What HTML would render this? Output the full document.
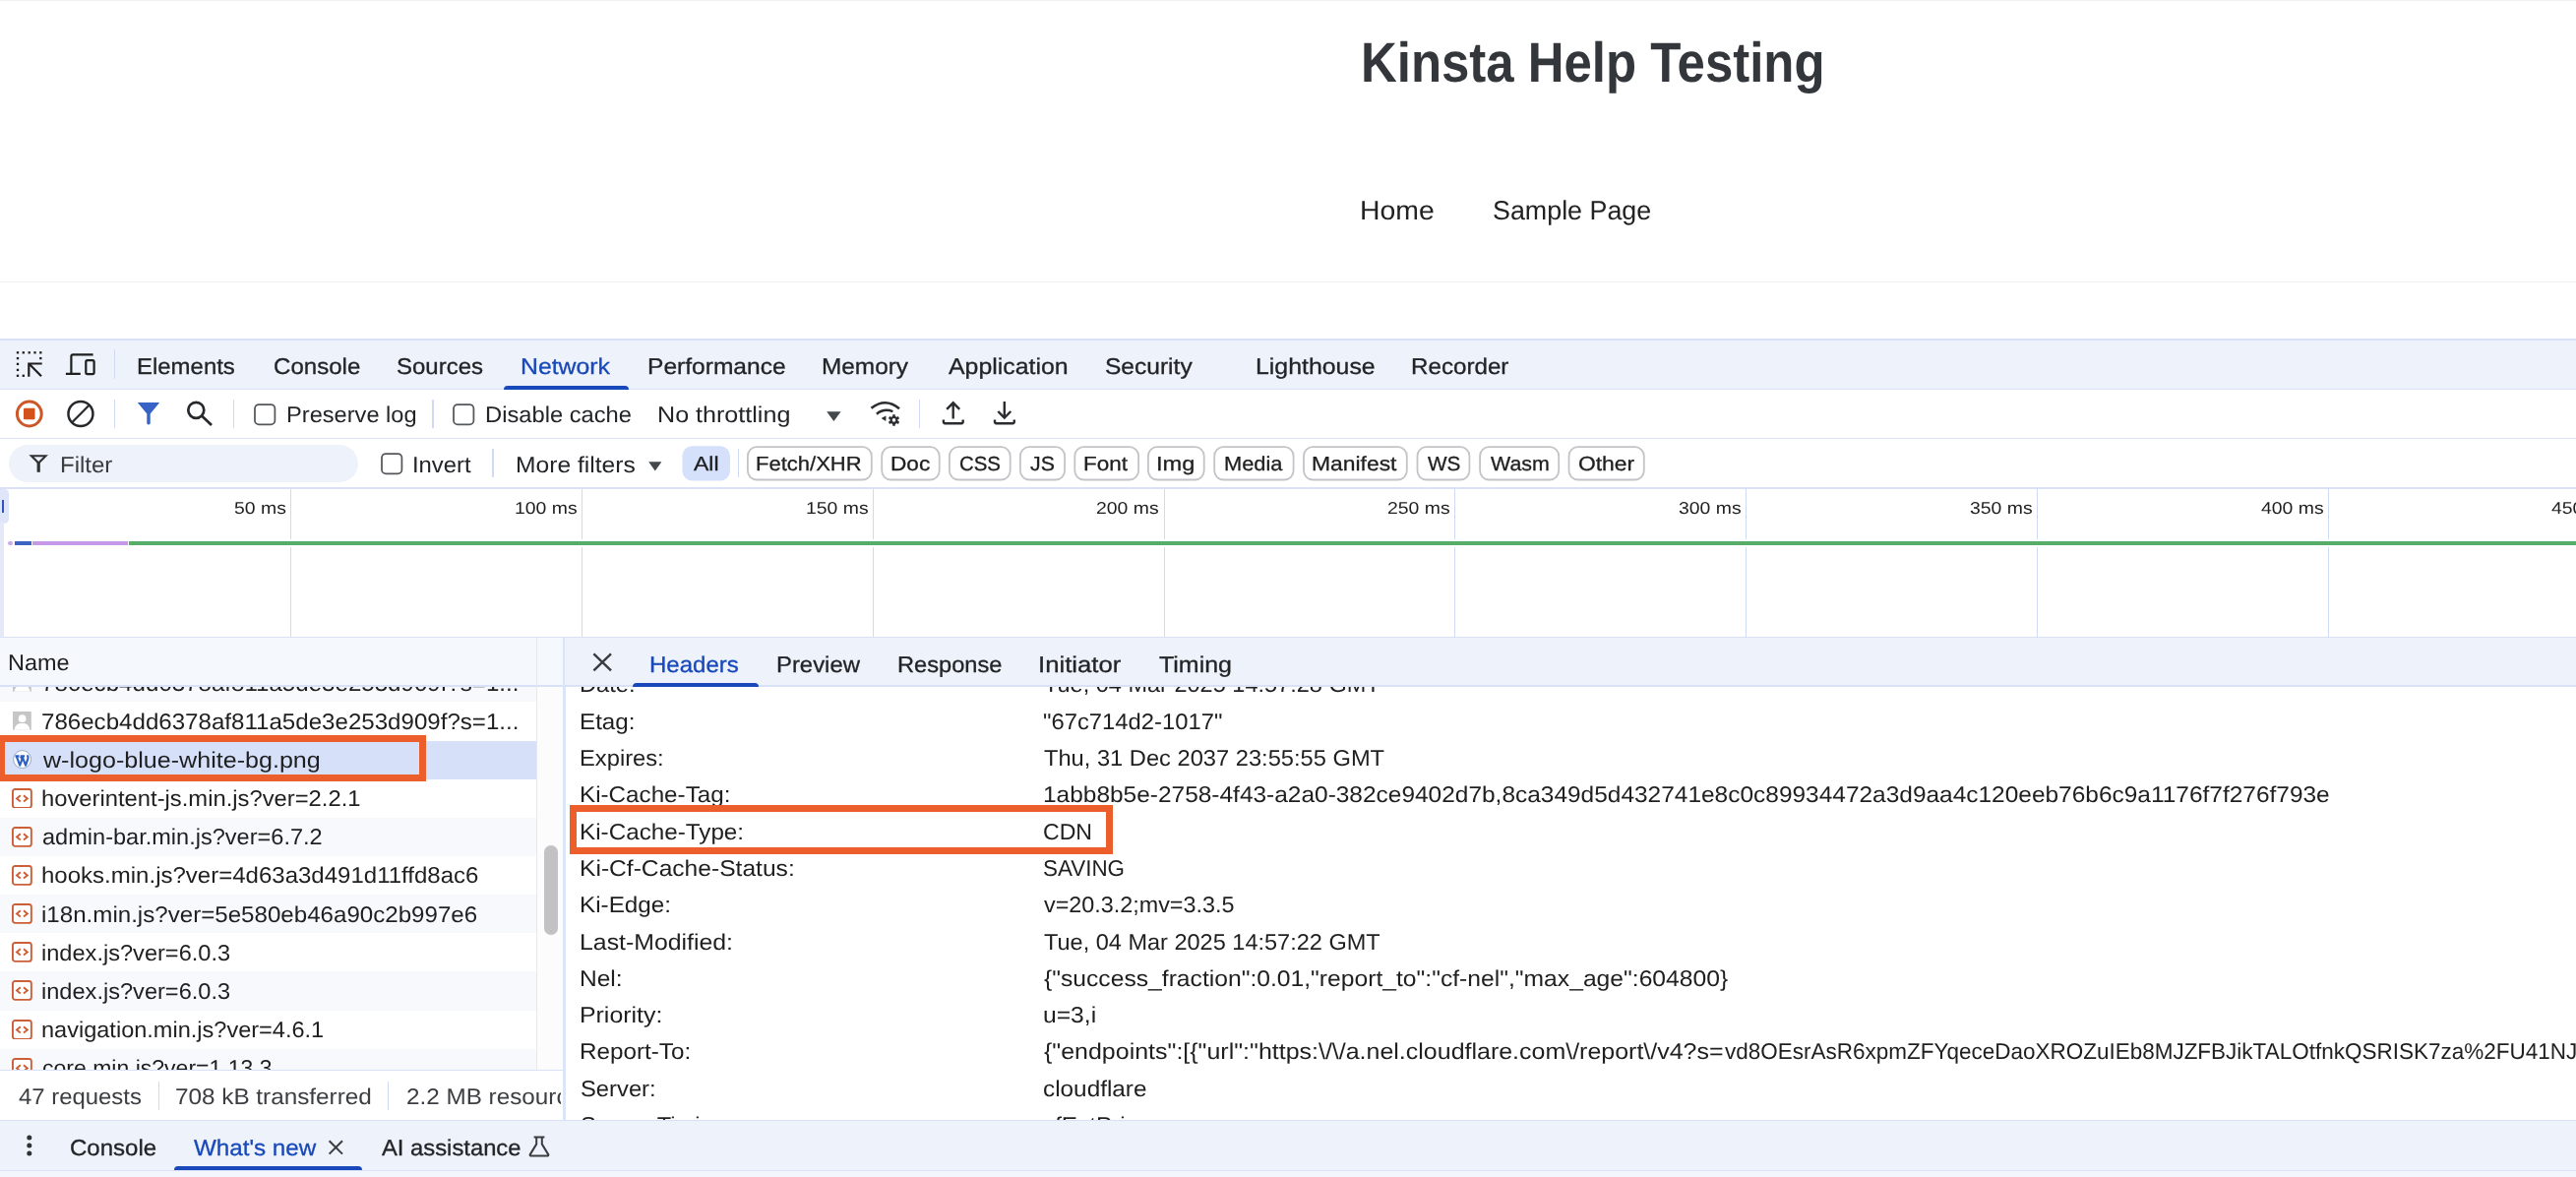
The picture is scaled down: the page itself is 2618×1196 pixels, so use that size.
<!DOCTYPE html>
<html lang="en"><head><meta charset="utf-8"><title>Kinsta Help Testing - DevTools Network</title>
<style>
html,body{margin:0;padding:0;overflow:hidden}
body{width:2618px;height:1196px;position:relative;overflow:hidden;background:#fff;font-family:'Liberation Sans',sans-serif;-webkit-font-smoothing:antialiased;will-change:transform;text-rendering:geometricPrecision}
.a,.t,.pill,.gl,.row,.ric,.sep,svg.i{position:absolute}
.t{white-space:pre;transform-origin:0 50%;letter-spacing:0}
.clip{position:absolute;overflow:hidden}
.clip>.in{position:absolute}
.bar{background:#eef2fa}
.ln{position:absolute;background:#d8e1f6}
.sep{width:1.3px;background:#d0dbf3}
.pill{top:453.6px;height:35.4px;box-sizing:border-box;border:2px solid #c6c6c8;border-radius:10px;background:#fff}
.pill.all{border:none;background:#d5e1fb}
.gl{top:497px;width:1px;height:150px;background:#cfdaf3}
.row{left:0;width:545px;height:39.15px;background:#fff}
.row.odd{background:#f8f9fd}
.row.sel{background:#d6e1f9}
.ric{left:12.3px;width:20px;height:20px}
.cb{position:absolute;box-sizing:border-box;width:21.8px;height:21.8px;border:2.1px solid #4a4c50;border-radius:4.6px;background:#fff}
.ob{position:absolute;box-sizing:border-box;border:7px solid #ec5f2c}
</style></head><body>
<div id="root" style="position:absolute;left:0;top:0;width:2618px;height:1196px;overflow:hidden;contain:paint">
<!-- page -->
<div class="a" style="left:0;top:0;width:2618px;height:1px;background:#f1f1f1"></div>
<div class="a" style="left:0;top:286.3px;width:2618px;height:1.2px;background:#eeeeef"></div>
<span class="t" style="left:1382.6px;top:24.4px;font-size:57px;line-height:80px;color:#33363a;transform:scaleX(0.8933);font-weight:700">Kinsta Help Testing</span>
<span class="t" style="left:1382.0px;top:195.2px;font-size:27.2px;line-height:38px;color:#222;transform:scaleX(1.0450)">Home</span>
<span class="t" style="left:1517.4px;top:195.2px;font-size:27.2px;line-height:38px;color:#222;transform:scaleX(0.9876)">Sample Page</span>

<!-- devtools bars -->
<div class="a bar" style="left:0;top:345px;width:2618px;height:50px"></div>
<div class="ln" style="left:0;top:344.3px;width:2618px;height:1.6px"></div>
<div class="ln" style="left:0;top:394.6px;width:2618px;height:1.6px"></div>
<div class="ln" style="left:0;top:445.1px;width:2618px;height:1.3px"></div>
<div class="ln" style="left:0;top:495.2px;width:2618px;height:1.6px"></div>
<div class="ln" style="left:0;top:646.7px;width:2618px;height:1.6px"></div>
<!-- network underline -->
<div class="a" style="left:512px;top:391.5px;width:127px;height:4px;background:#1848ba;border-radius:4px 4px 0 0"></div>

<!-- tab bar icons -->
<svg class="i" style="left:0;top:345px" width="130" height="50" viewBox="0 345 130 50"><g fill="#1f1f1f"><rect x="16.85" y="357.15" width="2.3" height="2.3"/><rect x="22.65" y="357.15" width="2.3" height="2.3"/><rect x="28.55" y="357.15" width="2.3" height="2.3"/><rect x="34.35" y="357.15" width="2.3" height="2.3"/><rect x="40.15" y="357.15" width="2.3" height="2.3"/><rect x="16.85" y="362.95" width="2.3" height="2.3"/><rect x="16.85" y="368.75" width="2.3" height="2.3"/><rect x="16.85" y="374.75" width="2.3" height="2.3"/><rect x="16.85" y="380.65" width="2.3" height="2.3"/><rect x="40.15" y="362.95" width="2.3" height="2.3"/><rect x="22.65" y="380.65" width="2.3" height="2.3"/></g>
<path d="M42.7 369.5H29.3V382.8M29.6 369.8L42 382.2" fill="none" stroke="#1f1f1f" stroke-width="2.2"/>
<path d="M94.6 360.4H74.2Q72.4 360.4 72.4 362.2V379M66.9 379.8H81.8" fill="none" stroke="#1f1f1f" stroke-width="2.2"/>
<rect x="87.3" y="366.1" width="8.3" height="14.1" rx="1.6" fill="none" stroke="#1f1f1f" stroke-width="2.2"/>
</svg>
<div class="sep" style="left:115.8px;top:355px;height:29.5px"></div>

<!-- toolbar icons -->
<svg class="i" style="left:14px;top:405px" width="32" height="32" viewBox="0 0 32 32"><circle cx="15.8" cy="15.5" r="12.4" fill="none" stroke="#cc5728" stroke-width="3"/><rect x="10" y="9.8" width="11.5" height="11.5" rx="1" fill="#d4511c"/></svg>
<svg class="i" style="left:66px;top:405px" width="32" height="32" viewBox="0 0 32 32" fill="none" stroke="#26282b" stroke-width="2.5"><circle cx="15.95" cy="15.5" r="12.5"/><path d="M7.2 24.2L24.6 6.8" stroke-width="2.2"/></svg>
<div class="sep" style="left:115.8px;top:406px;height:29px"></div>
<svg class="i" style="left:138px;top:407px" width="26" height="26" viewBox="0 0 26 26"><path d="M1.8 2.1H24.2L14.7 13.6V23.4Q13 25.6 11.3 23.4V13.6Z" fill="#3762c6"/></svg>
<svg class="i" style="left:188px;top:406px" width="30" height="28" viewBox="0 0 30 28" fill="none" stroke="#26282b" stroke-width="2.7"><circle cx="11.3" cy="10.8" r="8"/><path d="M17 16.6L27 26"/></svg>
<div class="sep" style="left:236.8px;top:406px;height:29px"></div>
<svg class="i" style="left:257.7px;top:409.5px" width="23" height="23" viewBox="0 0 23 23"><rect x="1" y="1" width="20.4" height="20.4" rx="4.2" fill="#fff" stroke="#54575b" stroke-width="1.75"/></svg>
<div class="sep" style="left:439.4px;top:406px;height:29px"></div>
<svg class="i" style="left:459.7px;top:409.5px" width="23" height="23" viewBox="0 0 23 23"><rect x="1" y="1" width="20.4" height="20.4" rx="4.2" fill="#fff" stroke="#54575b" stroke-width="1.75"/></svg>
<svg class="i" style="left:840px;top:418.2px" width="15" height="10" viewBox="0 0 15 10"><path d="M0.2 0.2H14.6L7.4 9.9Z" fill="#44474b"/></svg>
<svg class="i" style="left:880px;top:400px" width="40" height="40" viewBox="880 400 40 40" fill="none" stroke="#2a2c30">
<path d="M885.5 414.7Q899.9 403.6 914.0 415.2" stroke-width="2.5"/>
<path d="M890.9 420.7Q898.2 414.6 907.4 418.1" stroke-width="2.5"/>
<path d="M895.6 424.9L900.5 422.4L900.3 428Z" fill="#2a2c30" stroke="none"/>
<path d="M908.50 424.40L908.50 421.15M910.67 425.65L913.48 424.02M910.67 428.15L913.48 429.77M908.50 429.40L908.50 432.65M906.33 428.15L903.52 429.77M906.33 425.65L903.52 424.02" stroke-width="2.6"/>
<circle cx="908.5" cy="426.9" r="2.9" stroke-width="2.2"/>
</svg>
<div class="sep" style="left:933.5px;top:406px;height:29px"></div>
<svg class="i" style="left:956px;top:406px" width="26" height="27" viewBox="0 0 26 27" fill="none" stroke="#2a2c30" stroke-width="2.4"><path d="M12.7 19.5V3.6M6.2 9.8L12.7 3.3L19.2 9.8M2.9 20.4V22.6Q2.9 24.2 4.5 24.2H21.1Q22.7 24.2 22.7 22.6V20.4"/></svg>
<svg class="i" style="left:1008px;top:406px" width="26" height="27" viewBox="0 0 26 27" fill="none" stroke="#2a2c30" stroke-width="2.4"><path d="M12.8 2V18.2M6.3 12L12.8 18.5L19.3 12M3 20.4V22.6Q3 24.2 4.6 24.2H21.2Q22.8 24.2 22.8 22.6V20.4"/></svg>

<!-- filter row -->
<div class="a" style="left:9.3px;top:452.2px;width:354.7px;height:37.8px;border-radius:19px;background:#edf2fb"></div>
<svg class="i" style="left:29px;top:461px" width="20" height="20" viewBox="0 0 20 20" fill="none" stroke="#2f3135"><path d="M2.9 2.3H17.5L10.2 9.6Z" stroke-width="2.1" stroke-linejoin="miter"/><path d="M10.2 8.6V18.8" stroke-width="3.2"/></svg>
<svg class="i" style="left:386.5px;top:459.7px" width="23" height="23" viewBox="0 0 23 23"><rect x="1" y="1" width="20.4" height="20.4" rx="4.2" fill="#fff" stroke="#54575b" stroke-width="1.75"/></svg>
<div class="sep" style="left:500.4px;top:456px;height:29px"></div>
<svg class="i" style="left:658.6px;top:468.5px" width="14" height="10" viewBox="0 0 14 10"><path d="M0.2 0.2H13.4L6.8 9.6Z" fill="#44474b"/></svg>
<div class="sep" style="left:749.7px;top:456px;height:29px"></div>
<svg class="i" style="left:680px;top:445px" width="1010" height="52" viewBox="680 445 1010 52"><rect x="693.4" y="453.3" width="48.6" height="35.1" rx="10" fill="#d5e1fb"/><rect x="759.9" y="454.2" width="125.9" height="33.3" rx="9.2" fill="#fff" stroke="#c3c4c7" stroke-width="1.8"/><rect x="896.2" y="454.2" width="58.5" height="33.3" rx="9.2" fill="#fff" stroke="#c3c4c7" stroke-width="1.8"/><rect x="964.9" y="454.2" width="61.8" height="33.3" rx="9.2" fill="#fff" stroke="#c3c4c7" stroke-width="1.8"/><rect x="1036.9" y="454.2" width="45.2" height="33.3" rx="9.2" fill="#fff" stroke="#c3c4c7" stroke-width="1.8"/><rect x="1092.3" y="454.2" width="64.8" height="33.3" rx="9.2" fill="#fff" stroke="#c3c4c7" stroke-width="1.8"/><rect x="1166.9" y="454.2" width="56.8" height="33.3" rx="9.2" fill="#fff" stroke="#c3c4c7" stroke-width="1.8"/><rect x="1234.2" y="454.2" width="80.4" height="33.3" rx="9.2" fill="#fff" stroke="#c3c4c7" stroke-width="1.8"/><rect x="1325.0" y="454.2" width="104.8" height="33.3" rx="9.2" fill="#fff" stroke="#c3c4c7" stroke-width="1.8"/><rect x="1440.5" y="454.2" width="52.9" height="33.3" rx="9.2" fill="#fff" stroke="#c3c4c7" stroke-width="1.8"/><rect x="1504.1" y="454.2" width="80.1" height="33.3" rx="9.2" fill="#fff" stroke="#c3c4c7" stroke-width="1.8"/><rect x="1594.5" y="454.2" width="76.3" height="33.3" rx="9.2" fill="#fff" stroke="#c3c4c7" stroke-width="1.8"/></svg>

<!-- timeline -->
<div class="gl" style="left:295px"></div><div class="gl" style="left:591px"></div><div class="gl" style="left:887px"></div><div class="gl" style="left:1183px"></div><div class="gl" style="left:1478px"></div><div class="gl" style="left:1774px"></div><div class="gl" style="left:2070px"></div><div class="gl" style="left:2366px"></div>
<div class="a" style="left:0;top:497px;width:8.8px;height:34.5px;background:#dfe6fa;border-radius:0 4.5px 4.5px 0"></div>
<div class="a" style="left:0;top:531px;width:3.6px;height:115.5px;background:#e4e9f8"></div>
<div class="a" style="left:1.9px;top:508px;width:1.8px;height:13px;background:#2f55c0"></div>
<div class="a" style="left:4px;top:548px;width:2614px;height:8px;background:#fff"></div>
<div class="a" style="left:131.2px;top:549.8px;width:2487px;height:4.3px;background:#56ae68"></div>
<div class="a" style="left:33.3px;top:549.8px;width:96.5px;height:4.3px;background:#c599e8"></div>
<div class="a" style="left:14.7px;top:549.8px;width:17.3px;height:4.3px;background:#3a62c0"></div>
<div class="a" style="left:8.2px;top:550px;width:4.7px;height:4px;background:#cfa8ea;border-radius:2px"></div>
<span class="t" style="left:237.8px;top:504.9px;font-size:17.1px;line-height:24px;color:#1f1f1f;transform:scaleX(1.1350)">50 ms</span>
<span class="t" style="left:522.8px;top:504.9px;font-size:17.1px;line-height:24px;color:#1f1f1f;transform:scaleX(1.1350)">100 ms</span>
<span class="t" style="left:818.6px;top:504.9px;font-size:17.1px;line-height:24px;color:#1f1f1f;transform:scaleX(1.1350)">150 ms</span>
<span class="t" style="left:1114.4px;top:504.9px;font-size:17.1px;line-height:24px;color:#1f1f1f;transform:scaleX(1.1350)">200 ms</span>
<span class="t" style="left:1410.2px;top:504.9px;font-size:17.1px;line-height:24px;color:#1f1f1f;transform:scaleX(1.1350)">250 ms</span>
<span class="t" style="left:1706.0px;top:504.9px;font-size:17.1px;line-height:24px;color:#1f1f1f;transform:scaleX(1.1350)">300 ms</span>
<span class="t" style="left:2001.8px;top:504.9px;font-size:17.1px;line-height:24px;color:#1f1f1f;transform:scaleX(1.1350)">350 ms</span>
<span class="t" style="left:2297.6px;top:504.9px;font-size:17.1px;line-height:24px;color:#1f1f1f;transform:scaleX(1.1350)">400 ms</span>
<span class="t" style="left:2593.2px;top:504.9px;font-size:17.1px;line-height:24px;color:#1f1f1f;transform:scaleX(1.1350)">450 ms</span>

<!-- name header -->
<div class="a" style="left:0;top:648.3px;width:573px;height:48.4px;background:#f5f8fd"></div>
<div class="ln" style="left:0;top:696.4px;width:573px;height:1.5px"></div>
<!-- list -->
<div class="clip" style="left:0;top:698px;width:545px;height:389px;background:#fff"><div class="in" style="left:0;top:-698px">
<div class="row odd" style="top:674.27px"></div><svg class="ric" style="left:13px;top:684.1px;width:18.8px;height:18.8px" viewBox="0 0 20 20"><rect width="20" height="20" fill="#c6c6c6"/><circle cx="10.2" cy="7.6" r="4.1" fill="#fff"/><path d="M1.6 20c0.6-4.4 3.4-6.6 6.4-7.2h4.4c3 0.6 5.6 2.8 6.2 7.2z" fill="#fff"/></svg><div class="row" style="top:713.42px"></div><svg class="ric" style="left:13px;top:723.3px;width:18.8px;height:18.8px" viewBox="0 0 20 20"><rect width="20" height="20" fill="#c6c6c6"/><circle cx="10.2" cy="7.6" r="4.1" fill="#fff"/><path d="M1.6 20c0.6-4.4 3.4-6.6 6.4-7.2h4.4c3 0.6 5.6 2.8 6.2 7.2z" fill="#fff"/></svg><div class="row sel" style="top:752.57px"></div><svg class="ric" style="left:12.9px;top:762.2px;width:19.2px;height:19.2px" viewBox="0 0 20 20"><circle cx="10" cy="10" r="9.4" fill="#fdfdff" stroke="#8b9bc4" stroke-width="0.9"/><path d="M2.6 6.6h4.2M8 6.6h4.6M4 6.8l3.5 9.6 2.3-6.4-1.4-3.2M10 6.8l3.6 9.6 2.4-6.8c0.6-1.8 0.2-3-0.8-4" fill="none" stroke="#2a5fc4" stroke-width="2.2" stroke-linejoin="round"/></svg><div class="row" style="top:791.72px"></div><svg class="ric" style="left:11.9px;top:800.6px;width:20.8px;height:20.8px" viewBox="0 0 20.8 20.8"><rect x="0.95" y="0.95" width="18.9" height="18.9" rx="2.4" fill="#fff" stroke="#cb5f38" stroke-width="1.9"/><path d="M8.8 7.3L5 10.5l3.8 3M12 7.3l3.8 3.2-3.8 3" fill="none" stroke="#cb5f38" stroke-width="1.9"/></svg><div class="row odd" style="top:830.88px"></div><svg class="ric" style="left:11.9px;top:839.8px;width:20.8px;height:20.8px" viewBox="0 0 20.8 20.8"><rect x="0.95" y="0.95" width="18.9" height="18.9" rx="2.4" fill="#fff" stroke="#cb5f38" stroke-width="1.9"/><path d="M8.8 7.3L5 10.5l3.8 3M12 7.3l3.8 3.2-3.8 3" fill="none" stroke="#cb5f38" stroke-width="1.9"/></svg><div class="row" style="top:870.02px"></div><svg class="ric" style="left:11.9px;top:878.9px;width:20.8px;height:20.8px" viewBox="0 0 20.8 20.8"><rect x="0.95" y="0.95" width="18.9" height="18.9" rx="2.4" fill="#fff" stroke="#cb5f38" stroke-width="1.9"/><path d="M8.8 7.3L5 10.5l3.8 3M12 7.3l3.8 3.2-3.8 3" fill="none" stroke="#cb5f38" stroke-width="1.9"/></svg><div class="row odd" style="top:909.17px"></div><svg class="ric" style="left:11.9px;top:918.0px;width:20.8px;height:20.8px" viewBox="0 0 20.8 20.8"><rect x="0.95" y="0.95" width="18.9" height="18.9" rx="2.4" fill="#fff" stroke="#cb5f38" stroke-width="1.9"/><path d="M8.8 7.3L5 10.5l3.8 3M12 7.3l3.8 3.2-3.8 3" fill="none" stroke="#cb5f38" stroke-width="1.9"/></svg><div class="row" style="top:948.32px"></div><svg class="ric" style="left:11.9px;top:957.2px;width:20.8px;height:20.8px" viewBox="0 0 20.8 20.8"><rect x="0.95" y="0.95" width="18.9" height="18.9" rx="2.4" fill="#fff" stroke="#cb5f38" stroke-width="1.9"/><path d="M8.8 7.3L5 10.5l3.8 3M12 7.3l3.8 3.2-3.8 3" fill="none" stroke="#cb5f38" stroke-width="1.9"/></svg><div class="row odd" style="top:987.47px"></div><svg class="ric" style="left:11.9px;top:996.3px;width:20.8px;height:20.8px" viewBox="0 0 20.8 20.8"><rect x="0.95" y="0.95" width="18.9" height="18.9" rx="2.4" fill="#fff" stroke="#cb5f38" stroke-width="1.9"/><path d="M8.8 7.3L5 10.5l3.8 3M12 7.3l3.8 3.2-3.8 3" fill="none" stroke="#cb5f38" stroke-width="1.9"/></svg><div class="row" style="top:1026.62px"></div><svg class="ric" style="left:11.9px;top:1035.5px;width:20.8px;height:20.8px" viewBox="0 0 20.8 20.8"><rect x="0.95" y="0.95" width="18.9" height="18.9" rx="2.4" fill="#fff" stroke="#cb5f38" stroke-width="1.9"/><path d="M8.8 7.3L5 10.5l3.8 3M12 7.3l3.8 3.2-3.8 3" fill="none" stroke="#cb5f38" stroke-width="1.9"/></svg><div class="row odd" style="top:1065.77px"></div><svg class="ric" style="left:11.9px;top:1074.6px;width:20.8px;height:20.8px" viewBox="0 0 20.8 20.8"><rect x="0.95" y="0.95" width="18.9" height="18.9" rx="2.4" fill="#fff" stroke="#cb5f38" stroke-width="1.9"/><path d="M8.8 7.3L5 10.5l3.8 3M12 7.3l3.8 3.2-3.8 3" fill="none" stroke="#cb5f38" stroke-width="1.9"/></svg>
<span class="t" style="left:42.3px;top:677.6px;font-size:22.9px;line-height:32px;color:#1f1f1f;transform:scaleX(1.0530)">786ecb4dd6378af811a5de3e253d909f?s=1...</span>
<span class="t" style="left:42.3px;top:716.7px;font-size:22.9px;line-height:32px;color:#1f1f1f;transform:scaleX(1.0530)">786ecb4dd6378af811a5de3e253d909f?s=1...</span>
<span class="t" style="left:43.5px;top:755.9px;font-size:22.9px;line-height:32px;color:#1f1f1f;transform:scaleX(1.0963)">w-logo-blue-white-bg.png</span>
<span class="t" style="left:41.9px;top:795.0px;font-size:22.9px;line-height:32px;color:#1f1f1f;transform:scaleX(1.0389)">hoverintent-js.min.js?ver=2.2.1</span>
<span class="t" style="left:42.5px;top:834.2px;font-size:22.9px;line-height:32px;color:#1f1f1f;transform:scaleX(1.0287)">admin-bar.min.js?ver=6.7.2</span>
<span class="t" style="left:41.8px;top:873.3px;font-size:22.9px;line-height:32px;color:#1f1f1f;transform:scaleX(1.0492)">hooks.min.js?ver=4d63a3d491d11ffd8ac6</span>
<span class="t" style="left:41.9px;top:912.5px;font-size:22.9px;line-height:32px;color:#1f1f1f;transform:scaleX(1.0536)">i18n.min.js?ver=5e580eb46a90c2b997e6</span>
<span class="t" style="left:41.9px;top:951.6px;font-size:22.9px;line-height:32px;color:#1f1f1f;transform:scaleX(1.0305)">index.js?ver=6.0.3</span>
<span class="t" style="left:41.9px;top:990.8px;font-size:22.9px;line-height:32px;color:#1f1f1f;transform:scaleX(1.0305)">index.js?ver=6.0.3</span>
<span class="t" style="left:41.9px;top:1029.9px;font-size:22.9px;line-height:32px;color:#1f1f1f;transform:scaleX(1.0283)">navigation.min.js?ver=4.6.1</span>
<span class="t" style="left:42.5px;top:1069.0px;font-size:22.9px;line-height:32px;color:#1f1f1f;transform:scaleX(1.0055)">core.min.js?ver=1.13.3</span>
</div></div>
<!-- scrollbar -->
<div class="a" style="left:545px;top:698px;width:28px;height:389px;background:#fcfcfc"></div>
<div class="a" style="left:544.8px;top:648.3px;width:1.2px;height:439px;background:#e6e8ee"></div>
<div class="a" style="left:553px;top:859.3px;width:13.7px;height:90.8px;border-radius:7px;background:#c2c2c4"></div>

<!-- status bar -->
<div class="ln" style="left:0;top:1086.6px;width:573px;height:1.5px"></div>
<div class="sep" style="left:160.8px;top:1098.5px;height:29px"></div>
<div class="sep" style="left:393.8px;top:1098.5px;height:29px"></div>
<div class="clip" style="left:0;top:1089px;width:569.5px;height:48px"><div class="in" style="left:0;top:-1089px">
<span class="t" style="left:412.5px;top:1097.8px;font-size:22.9px;line-height:32px;color:#3c3e42;transform:scaleX(1.0600)">2.2 MB resources</span>
</div></div>
<!-- divider -->
<div class="a" style="left:572.2px;top:648px;width:2.4px;height:490px;background:#dbe5f9"></div>

<!-- right panel -->
<div class="a bar" style="left:574px;top:648.3px;width:2044px;height:48.6px"></div>
<div class="ln" style="left:574px;top:696.4px;width:2044px;height:1.6px"></div>
<svg class="i" style="left:601px;top:662px" width="22" height="22" viewBox="0 0 22 22" fill="none" stroke="#3a3c40" stroke-width="2.4"><path d="M2.4 2.3L20 19.4M20 2.3L2.4 19.4"/></svg>
<div class="clip" style="left:574px;top:698px;width:2044px;height:440px"><div class="in" style="left:-574px;top:-698px">
<span class="t" style="left:589.1px;top:679.4px;font-size:22.9px;line-height:32px;color:#1f1f1f;transform:scaleX(1.0350)">Date:</span>
<span class="t" style="left:1060.9px;top:679.4px;font-size:22.9px;line-height:32px;color:#1f1f1f;transform:scaleX(1.0275)">Tue, 04 Mar 2025 14:57:28 GMT</span>
<span class="t" style="left:589.0px;top:716.7px;font-size:22.9px;line-height:32px;color:#1f1f1f;transform:scaleX(1.0569)">Etag:</span>
<span class="t" style="left:1060.4px;top:716.7px;font-size:22.9px;line-height:32px;color:#1f1f1f;transform:scaleX(1.0403)">&quot;67c714d2-1017&quot;</span>
<span class="t" style="left:589.1px;top:754.0px;font-size:22.9px;line-height:32px;color:#1f1f1f;transform:scaleX(1.0364)">Expires:</span>
<span class="t" style="left:1060.9px;top:754.0px;font-size:22.9px;line-height:32px;color:#1f1f1f;transform:scaleX(1.0341)">Thu, 31 Dec 2037 23:55:55 GMT</span>
<span class="t" style="left:589.0px;top:791.3px;font-size:22.9px;line-height:32px;color:#1f1f1f;transform:scaleX(1.0576)">Ki-Cache-Tag:</span>
<span class="t" style="left:1059.5px;top:791.3px;font-size:22.9px;line-height:32px;color:#1f1f1f;transform:scaleX(1.0683)">1abb8b5e-2758-4f43-a2a0-382ce9402d7b,8ca349d5d432741e8c0c89934472a3d9aa4c120eeb76b6c9a1176f7f276f793e</span>
<span class="t" style="left:589.0px;top:828.6px;font-size:22.9px;line-height:32px;color:#1f1f1f;transform:scaleX(1.0592)">Ki-Cache-Type:</span>
<span class="t" style="left:1060.2px;top:828.6px;font-size:22.9px;line-height:32px;color:#1f1f1f;transform:scaleX(1.0094)">CDN</span>
<span class="t" style="left:589.0px;top:865.9px;font-size:22.9px;line-height:32px;color:#1f1f1f;transform:scaleX(1.0748)">Ki-Cf-Cache-Status:</span>
<span class="t" style="left:1060.4px;top:865.9px;font-size:22.9px;line-height:32px;color:#1f1f1f;transform:scaleX(0.9785)">SAVING</span>
<span class="t" style="left:589.0px;top:903.2px;font-size:22.9px;line-height:32px;color:#1f1f1f;transform:scaleX(1.0605)">Ki-Edge:</span>
<span class="t" style="left:1061.3px;top:903.2px;font-size:22.9px;line-height:32px;color:#1f1f1f;transform:scaleX(1.0203)">v=20.3.2;mv=3.3.5</span>
<span class="t" style="left:589.0px;top:940.5px;font-size:22.9px;line-height:32px;color:#1f1f1f;transform:scaleX(1.0850)">Last-Modified:</span>
<span class="t" style="left:1060.9px;top:940.5px;font-size:22.9px;line-height:32px;color:#1f1f1f;transform:scaleX(1.0275)">Tue, 04 Mar 2025 14:57:22 GMT</span>
<span class="t" style="left:589.0px;top:977.8px;font-size:22.9px;line-height:32px;color:#1f1f1f;transform:scaleX(1.0721)">Nel:</span>
<span class="t" style="left:1061.0px;top:977.8px;font-size:22.9px;line-height:32px;color:#1f1f1f;transform:scaleX(1.0773)">{&quot;success_fraction&quot;:0.01,&quot;report_to&quot;:&quot;cf-nel&quot;,&quot;max_age&quot;:604800}</span>
<span class="t" style="left:589.0px;top:1015.1px;font-size:22.9px;line-height:32px;color:#1f1f1f;transform:scaleX(1.0866)">Priority:</span>
<span class="t" style="left:1059.8px;top:1015.1px;font-size:22.9px;line-height:32px;color:#1f1f1f;transform:scaleX(1.0772)">u=3,i</span>
<span class="t" style="left:589.0px;top:1052.4px;font-size:22.9px;line-height:32px;color:#1f1f1f;transform:scaleX(1.0592)">Report-To:</span>
<span class="t" style="left:1061.0px;top:1052.4px;font-size:22.9px;line-height:32px;color:#1f1f1f;transform:scaleX(1.0910)">{&quot;endpoints&quot;:[{&quot;url&quot;:&quot;https:\/\/a.nel.cloudflare.com\/report\/v4?s=</span>
<span class="t" style="left:1753.3px;top:1052.4px;font-size:22.9px;line-height:32px;color:#1f1f1f;transform:scaleX(0.9825)">vd8OEsrAsR6xpmZFYqeceDaoXROZuIEb8MJZFBJikTALOtfnkQSRISK7za%2FU41NJxQ8sVb3</span>
<span class="t" style="left:589.9px;top:1089.7px;font-size:22.9px;line-height:32px;color:#1f1f1f;transform:scaleX(1.0389)">Server:</span>
<span class="t" style="left:1060.4px;top:1089.7px;font-size:22.9px;line-height:32px;color:#1f1f1f;transform:scaleX(1.0630)">cloudflare</span>
<span class="t" style="left:589.9px;top:1127.0px;font-size:22.9px;line-height:32px;color:#1f1f1f;transform:scaleX(1.0350)">Server-Timing:</span>
<span class="t" style="left:1060.4px;top:1127.0px;font-size:22.9px;line-height:32px;color:#1f1f1f;transform:scaleX(1.0600)">cfExtPri</span>
</div></div>
<div class="a" style="left:642.5px;top:694.4px;width:128px;height:3.8px;background:#1848ba;border-radius:4px 4px 0 0"></div>

<!-- drawer -->
<div class="a bar" style="left:0;top:1138.5px;width:2618px;height:50.5px"></div>
<div class="ln" style="left:0;top:1137.5px;width:2618px;height:1.6px"></div>
<div class="ln" style="left:0;top:1188.6px;width:2618px;height:1.4px"></div>
<div class="a" style="left:0;top:1190px;width:2618px;height:6px;background:#f3f6fc"></div>
<svg class="i" style="left:25px;top:1152px" width="10" height="24" viewBox="0 0 10 24" fill="#2f3135"><circle cx="4.8" cy="3.9" r="2.5"/><circle cx="4.8" cy="11.9" r="2.5"/><circle cx="4.8" cy="19.9" r="2.5"/></svg>
<svg class="i" style="left:332.5px;top:1157.5px" width="18" height="18" viewBox="0 0 18 18" fill="none" stroke="#3a3c40" stroke-width="2"><path d="M1.6 1.2L15 14.6M15 1.2L1.6 14.6"/></svg>
<div class="a" style="left:177px;top:1185.2px;width:190.7px;height:3.9px;background:#1848ba;border-radius:4px 4px 0 0"></div>
<svg class="i" style="left:536px;top:1153px" width="24" height="24" viewBox="0 0 24 24" fill="none" stroke="#3a3c40" stroke-width="2"><path d="M6.6 2.6H17.4M9.2 2.8V9.6L2.6 20.4Q2.6 21.6 4 21.6H20Q21.4 21.6 21.4 20.4L14.8 9.6V2.8"/></svg>

<span class="t" style="left:139.0px;top:356.0px;font-size:22.9px;line-height:32px;color:#222427;transform:scaleX(1.0462);-webkit-text-stroke:0.3px #222427">Elements</span>
<span class="t" style="left:277.8px;top:356.0px;font-size:22.9px;line-height:32px;color:#222427;transform:scaleX(1.0511);-webkit-text-stroke:0.3px #222427">Console</span>
<span class="t" style="left:402.9px;top:356.0px;font-size:22.9px;line-height:32px;color:#222427;transform:scaleX(1.0473);-webkit-text-stroke:0.3px #222427">Sources</span>
<span class="t" style="left:657.5px;top:356.0px;font-size:22.9px;line-height:32px;color:#222427;transform:scaleX(1.0730);-webkit-text-stroke:0.3px #222427">Performance</span>
<span class="t" style="left:835.0px;top:356.0px;font-size:22.9px;line-height:32px;color:#222427;transform:scaleX(1.0650);-webkit-text-stroke:0.3px #222427">Memory</span>
<span class="t" style="left:964.0px;top:356.0px;font-size:22.9px;line-height:32px;color:#222427;transform:scaleX(1.0864);-webkit-text-stroke:0.3px #222427">Application</span>
<span class="t" style="left:1123.4px;top:356.0px;font-size:22.9px;line-height:32px;color:#222427;transform:scaleX(1.0721);-webkit-text-stroke:0.3px #222427">Security</span>
<span class="t" style="left:1275.5px;top:356.0px;font-size:22.9px;line-height:32px;color:#222427;transform:scaleX(1.0860);-webkit-text-stroke:0.3px #222427">Lighthouse</span>
<span class="t" style="left:1434.0px;top:356.0px;font-size:22.9px;line-height:32px;color:#222427;transform:scaleX(1.0555);-webkit-text-stroke:0.3px #222427">Recorder</span>
<span class="t" style="left:529.0px;top:356.0px;font-size:22.9px;line-height:32px;color:#1848ba;transform:scaleX(1.0839);-webkit-text-stroke:0.3px #1848ba">Network</span>
<span class="t" style="left:290.5px;top:404.8px;font-size:22.9px;line-height:32px;color:#222427;transform:scaleX(1.0323)">Preserve log</span>
<span class="t" style="left:493.1px;top:404.8px;font-size:22.9px;line-height:32px;color:#222427;transform:scaleX(1.0362)">Disable cache</span>
<span class="t" style="left:668.2px;top:404.8px;font-size:22.9px;line-height:32px;color:#222427;transform:scaleX(1.0969)">No throttling</span>
<span class="t" style="left:61.1px;top:455.5px;font-size:22.9px;line-height:32px;color:#3a3c3f;transform:scaleX(1.0490)">Filter</span>
<span class="t" style="left:419.4px;top:455.5px;font-size:22.9px;line-height:32px;color:#222427;transform:scaleX(1.0406)">Invert</span>
<span class="t" style="left:523.5px;top:455.5px;font-size:22.9px;line-height:32px;color:#222427;transform:scaleX(1.0751)">More filters</span>
<span class="t" style="left:705.0px;top:457.7px;font-size:20.3px;line-height:28px;color:#1f1f1f;transform:scaleX(1.1348);-webkit-text-stroke:0.3px #1f1f1f">All</span>
<span class="t" style="left:768.2px;top:457.7px;font-size:20.3px;line-height:28px;color:#1f1f1f;transform:scaleX(1.0851);-webkit-text-stroke:0.3px #1f1f1f">Fetch/XHR</span>
<span class="t" style="left:905.1px;top:457.7px;font-size:20.3px;line-height:28px;color:#1f1f1f;transform:scaleX(1.1158);-webkit-text-stroke:0.3px #1f1f1f">Doc</span>
<span class="t" style="left:975.0px;top:457.7px;font-size:20.3px;line-height:28px;color:#1f1f1f;transform:scaleX(1.0065);-webkit-text-stroke:0.3px #1f1f1f">CSS</span>
<span class="t" style="left:1047.2px;top:457.7px;font-size:20.3px;line-height:28px;color:#1f1f1f;transform:scaleX(1.0480);-webkit-text-stroke:0.3px #1f1f1f">JS</span>
<span class="t" style="left:1101.2px;top:457.7px;font-size:20.3px;line-height:28px;color:#1f1f1f;transform:scaleX(1.1088);-webkit-text-stroke:0.3px #1f1f1f">Font</span>
<span class="t" style="left:1174.8px;top:457.7px;font-size:20.3px;line-height:28px;color:#1f1f1f;transform:scaleX(1.1655);-webkit-text-stroke:0.3px #1f1f1f">Img</span>
<span class="t" style="left:1243.7px;top:457.7px;font-size:20.3px;line-height:28px;color:#1f1f1f;transform:scaleX(1.0768);-webkit-text-stroke:0.3px #1f1f1f">Media</span>
<span class="t" style="left:1333.3px;top:457.7px;font-size:20.3px;line-height:28px;color:#1f1f1f;transform:scaleX(1.1277);-webkit-text-stroke:0.3px #1f1f1f">Manifest</span>
<span class="t" style="left:1451.2px;top:457.7px;font-size:20.3px;line-height:28px;color:#1f1f1f;transform:scaleX(1.0205);-webkit-text-stroke:0.3px #1f1f1f">WS</span>
<span class="t" style="left:1515.4px;top:457.7px;font-size:20.3px;line-height:28px;color:#1f1f1f;transform:scaleX(1.0544);-webkit-text-stroke:0.3px #1f1f1f">Wasm</span>
<span class="t" style="left:1604.0px;top:457.7px;font-size:20.3px;line-height:28px;color:#1f1f1f;transform:scaleX(1.1267);-webkit-text-stroke:0.3px #1f1f1f">Other</span>
<span class="t" style="left:8.1px;top:657.0px;font-size:22.9px;line-height:32px;color:#1f1f1f;transform:scaleX(1.0246)">Name</span>
<span class="t" style="left:18.9px;top:1097.8px;font-size:22.9px;line-height:32px;color:#3c3e42;transform:scaleX(1.0442)">47 requests</span>
<span class="t" style="left:178.2px;top:1097.8px;font-size:22.9px;line-height:32px;color:#3c3e42;transform:scaleX(1.0611)">708 kB transferred</span>
<span class="t" style="left:70.8px;top:1149.8px;font-size:22.9px;line-height:32px;color:#222427;transform:scaleX(1.0486);-webkit-text-stroke:0.3px #222427">Console</span>
<span class="t" style="left:196.9px;top:1149.8px;font-size:22.9px;line-height:32px;color:#1848ba;transform:scaleX(1.0564);-webkit-text-stroke:0.3px #1848ba">What&#x27;s new</span>
<span class="t" style="left:387.6px;top:1149.8px;font-size:22.9px;line-height:32px;color:#222427;transform:scaleX(1.0394);-webkit-text-stroke:0.3px #222427">AI assistance</span>
<span class="t" style="left:660.0px;top:659.0px;font-size:22.9px;line-height:32px;color:#1848ba;transform:scaleX(1.0498);-webkit-text-stroke:0.3px #1848ba">Headers</span>
<span class="t" style="left:788.6px;top:659.0px;font-size:22.9px;line-height:32px;color:#222427;transform:scaleX(1.0427);-webkit-text-stroke:0.3px #222427">Preview</span>
<span class="t" style="left:912.1px;top:659.0px;font-size:22.9px;line-height:32px;color:#222427;transform:scaleX(1.0321);-webkit-text-stroke:0.3px #222427">Response</span>
<span class="t" style="left:1055.1px;top:659.0px;font-size:22.9px;line-height:32px;color:#222427;transform:scaleX(1.1228);-webkit-text-stroke:0.3px #222427">Initiator</span>
<span class="t" style="left:1178.1px;top:659.0px;font-size:22.9px;line-height:32px;color:#222427;transform:scaleX(1.0903);-webkit-text-stroke:0.3px #222427">Timing</span>

<!-- highlight boxes -->
<div class="ob" style="left:-1.7px;top:747.4px;width:434.7px;height:46.6px"></div>
<div class="ob" style="left:578.6px;top:818.2px;width:552.4px;height:49.4px"></div>
</div>
</body></html>
